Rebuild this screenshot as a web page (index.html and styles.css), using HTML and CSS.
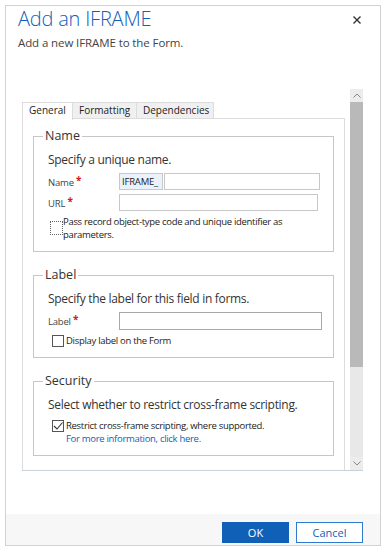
FILE: index.html
```html
<!DOCTYPE html>
<html lang="en">
<head>
    <meta charset="UTF-8">
    <meta name="viewport" content="width=device-width, initial-scale=1.0">
    <title>Add an IFRAME</title>
    <link rel="stylesheet" href="styles.css">
</head>
<body>
    <div class="dialog">
        <div class="dialog-header">
            <h1 class="title">Add an IFRAME</h1>
            <p class="subtitle">Add a new IFRAME to the Form.</p>
            <span class="close">
                <svg width="10" height="10" viewBox="0 0 10 10"><path d="M1.5 1.5 L8.5 8.5 M8.5 1.5 L1.5 8.5" stroke="#333" stroke-width="1.4"/></svg>
            </span>
        </div>

        <div class="scroll-area">
            <div class="scroll-content">
                <div class="tabs">
                    <span class="tab active">General</span>
                    <span class="tab">Formatting</span>
                    <span class="tab">Dependencies</span>
                </div>
                <div class="tab-panel">
                    <fieldset class="section">
                        <legend>Name</legend>
                        <p class="section-desc">Specify a unique name.</p>
                        <div class="field-row">
                            <span class="field-label">Name <span class="req">*</span></span>
                            <span class="prefix">IFRAME_</span>
                            <span class="input name-input"></span>
                        </div>
                        <div class="field-row">
                            <span class="field-label">URL <span class="req">*</span></span>
                            <span class="input url-input"></span>
                        </div>
                        <div class="check-row">
                            <span class="checkbox focused"></span>
                            <span class="check-text">Pass record object-type code and unique identifier as parameters.</span>
                        </div>
                    </fieldset>

                    <fieldset class="section">
                        <legend>Label</legend>
                        <p class="section-desc">Specify the label for this field in forms.</p>
                        <div class="field-row">
                            <span class="field-label">Label <span class="req">*</span></span>
                            <span class="input label-input"></span>
                        </div>
                        <div class="check-row">
                            <span class="checkbox"></span>
                            <span class="check-text">Display label on the Form</span>
                        </div>
                    </fieldset>

                    <fieldset class="section">
                        <legend>Security</legend>
                        <p class="section-desc">Select whether to restrict cross-frame scripting.</p>
                        <div class="check-row">
                            <span class="checkbox">
                                <svg width="10" height="10" viewBox="0 0 10 10"><path d="M1 5 L4 8 L9.5 1.5" fill="none" stroke="#333" stroke-width="1.1"/></svg>
                            </span>
                            <span class="check-text">Restrict cross-frame scripting, where supported.<br><a href="#">For more information, click here.</a></span>
                        </div>
                    </fieldset>
                </div>
            </div>
            <div class="scrollbar">
                <span class="sb-btn">
                    <svg width="8" height="5" viewBox="0 0 8 5"><path d="M0.5 4.5 L4 1 L7.5 4.5" fill="none" stroke="#888" stroke-width="1"/></svg>
                </span>
                <span class="sb-thumb"></span>
                <span class="sb-track"></span>
                <span class="sb-btn">
                    <svg width="8" height="5" viewBox="0 0 8 5"><path d="M0.5 0.5 L4 4 L7.5 0.5" fill="none" stroke="#888" stroke-width="1"/></svg>
                </span>
            </div>
        </div>

        <div class="dialog-footer">
            <button class="btn btn-primary">OK</button>
            <button class="btn btn-secondary">Cancel</button>
        </div>
    </div>
</body>
</html>
```

FILE: styles.css
```css
/* General Styles */
body {
    margin: 0;
    padding: 0;
    font-family: "Open Sans", "Noto Sans", sans-serif;
    background: #fff;
    color: #333;
}

.dialog {
    margin: 5px;
    width: 374px;
    height: 539px;
    border: 1px solid #d2d2d2;
    display: flex;
    flex-direction: column;
}

/* Header */
.dialog-header {
    height: 83px;
    padding: 0 12px;
    position: relative;
    flex-shrink: 0;
}

.title {
    margin: 0;
    font-size: 20px;
    font-weight: 300;
    line-height: 26px;
    letter-spacing: -0.2px;
    color: #1160b7;
}

.subtitle {
    margin: 3px 0 0;
    font-size: 11.5px;
    line-height: 16px;
    letter-spacing: -0.1px;
    color: #444;
}

.close {
    position: absolute;
    top: 9px;
    right: 18px;
    line-height: 0;
}

/* Scroll area */
.scroll-area {
    margin: 0 17px 0 16px;
    height: 381px;
    display: flex;
    border-bottom: 1px solid #c9d1d9;
    overflow: hidden;
    flex-shrink: 0;
}

.scroll-content {
    flex: 1;
    padding-top: 13px;
    padding-right: 5px;
}

.tabs {
    display: flex;
    height: 16px;
}

.tab {
    font-size: 10px;
    line-height: 15px;
    padding: 0 6px;
    border: 1px solid #dcdcdc;
    border-bottom: none;
    background: #f0f0f0;
    color: #222;
    margin-left: -1px;
}

.tab:first-child {
    margin-left: 0;
}

.tab.active {
    background: #fff;
    position: relative;
    z-index: 1;
    height: 17px;
}

.tab:nth-child(1) { width: 37px; }
.tab:nth-child(2) { width: 51px; }
.tab:nth-child(3) { width: 64px; }

.tab-panel {
    border: 1px solid #dcdcdc;
    padding: 8px 10px 20px;
    height: 400px;
}

/* Sections */
.section {
    margin: 0 0 14px;
    padding: 0 10px 10px 14px;
    border: 1px solid #c6c6c6;
    min-width: 0;
}

.section legend {
    font-size: 12.5px;
    line-height: 18px;
    padding: 0 2px;
    margin-left: -5px;
    color: #333;
}

.section-desc {
    margin: 5px 0 3px;
    font-size: 12px;
    line-height: 20px;
    letter-spacing: -0.3px;
    color: #333;
}

.field-row {
    display: flex;
    align-items: center;
    margin-bottom: 4px;
}

.field-label {
    width: 71px;
    font-size: 9.5px;
    letter-spacing: -0.2px;
    color: #444;
    flex-shrink: 0;
}

.req {
    color: #d21a1a;
    font-size: 10px;
    font-weight: bold;
    position: relative;
    top: -2px;
}

.prefix {
    width: 40px;
    height: 15px;
    padding-left: 2px;
    border: 1px solid #c8c8c8;
    background: #eaf3fd;
    font-size: 9.5px;
    letter-spacing: -0.2px;
    line-height: 15px;
    color: #222;
}

.input {
    height: 15px;
    border: 1px solid #c8c8c8;
    background: #fff;
}

.name-input {
    width: 154px;
    margin-left: 1px;
}

.url-input {
    width: 197px;
}

.label-input {
    width: 201px;
    height: 16px;
    border-color: #a8a8a8;
}

.check-row {
    display: flex;
    align-items: flex-start;
    margin-top: 4px;
    padding-left: 4px;
}

.checkbox {
    width: 10px;
    height: 10px;
    border: 1px solid #555;
    flex-shrink: 0;
    margin: 1px 2px 0 0;
    display: flex;
    align-items: center;
    justify-content: center;
    line-height: 0;
}

.checkbox.focused {
    border: 1px dotted #666;
    margin: 6px 0 0 -2px;
    width: 11px;
    height: 12px;
}

.check-text {
    font-size: 9.5px;
    line-height: 13px;
    letter-spacing: -0.3px;
    color: #222;
}

.check-text a {
    color: #1160b7;
    text-decoration: none;
}

/* Scrollbar */
.scrollbar {
    width: 13px;
    display: flex;
    flex-direction: column;
    flex-shrink: 0;
    background: #e8e8e8;
}

.sb-btn {
    height: 13px;
    display: flex;
    align-items: center;
    justify-content: center;
    background: #ececec;
}

.sb-thumb {
    height: 265px;
    background: #b9b9b9;
}

.sb-track {
    flex: 1;
}

/* Footer */
.dialog-footer {
    margin-top: auto;
    height: 31px;
    background: #f7f7f7;
    display: flex;
    justify-content: flex-end;
    align-items: flex-start;
    gap: 7px;
    padding: 8px 17px 0 0;
    box-sizing: border-box;
}

.btn {
    width: 67px;
    height: 21px;
    font-family: "Open Sans", "Noto Sans", sans-serif;
    font-size: 11px;
    border-radius: 0;
    cursor: pointer;
    padding: 0;
}

.btn-primary {
    background: #1160b7;
    border: 1px solid #1160b7;
    color: #fff;
}

.btn-secondary {
    background: #fff;
    border: 1px solid #2d7ad0;
    color: #1160b7;
}
```
